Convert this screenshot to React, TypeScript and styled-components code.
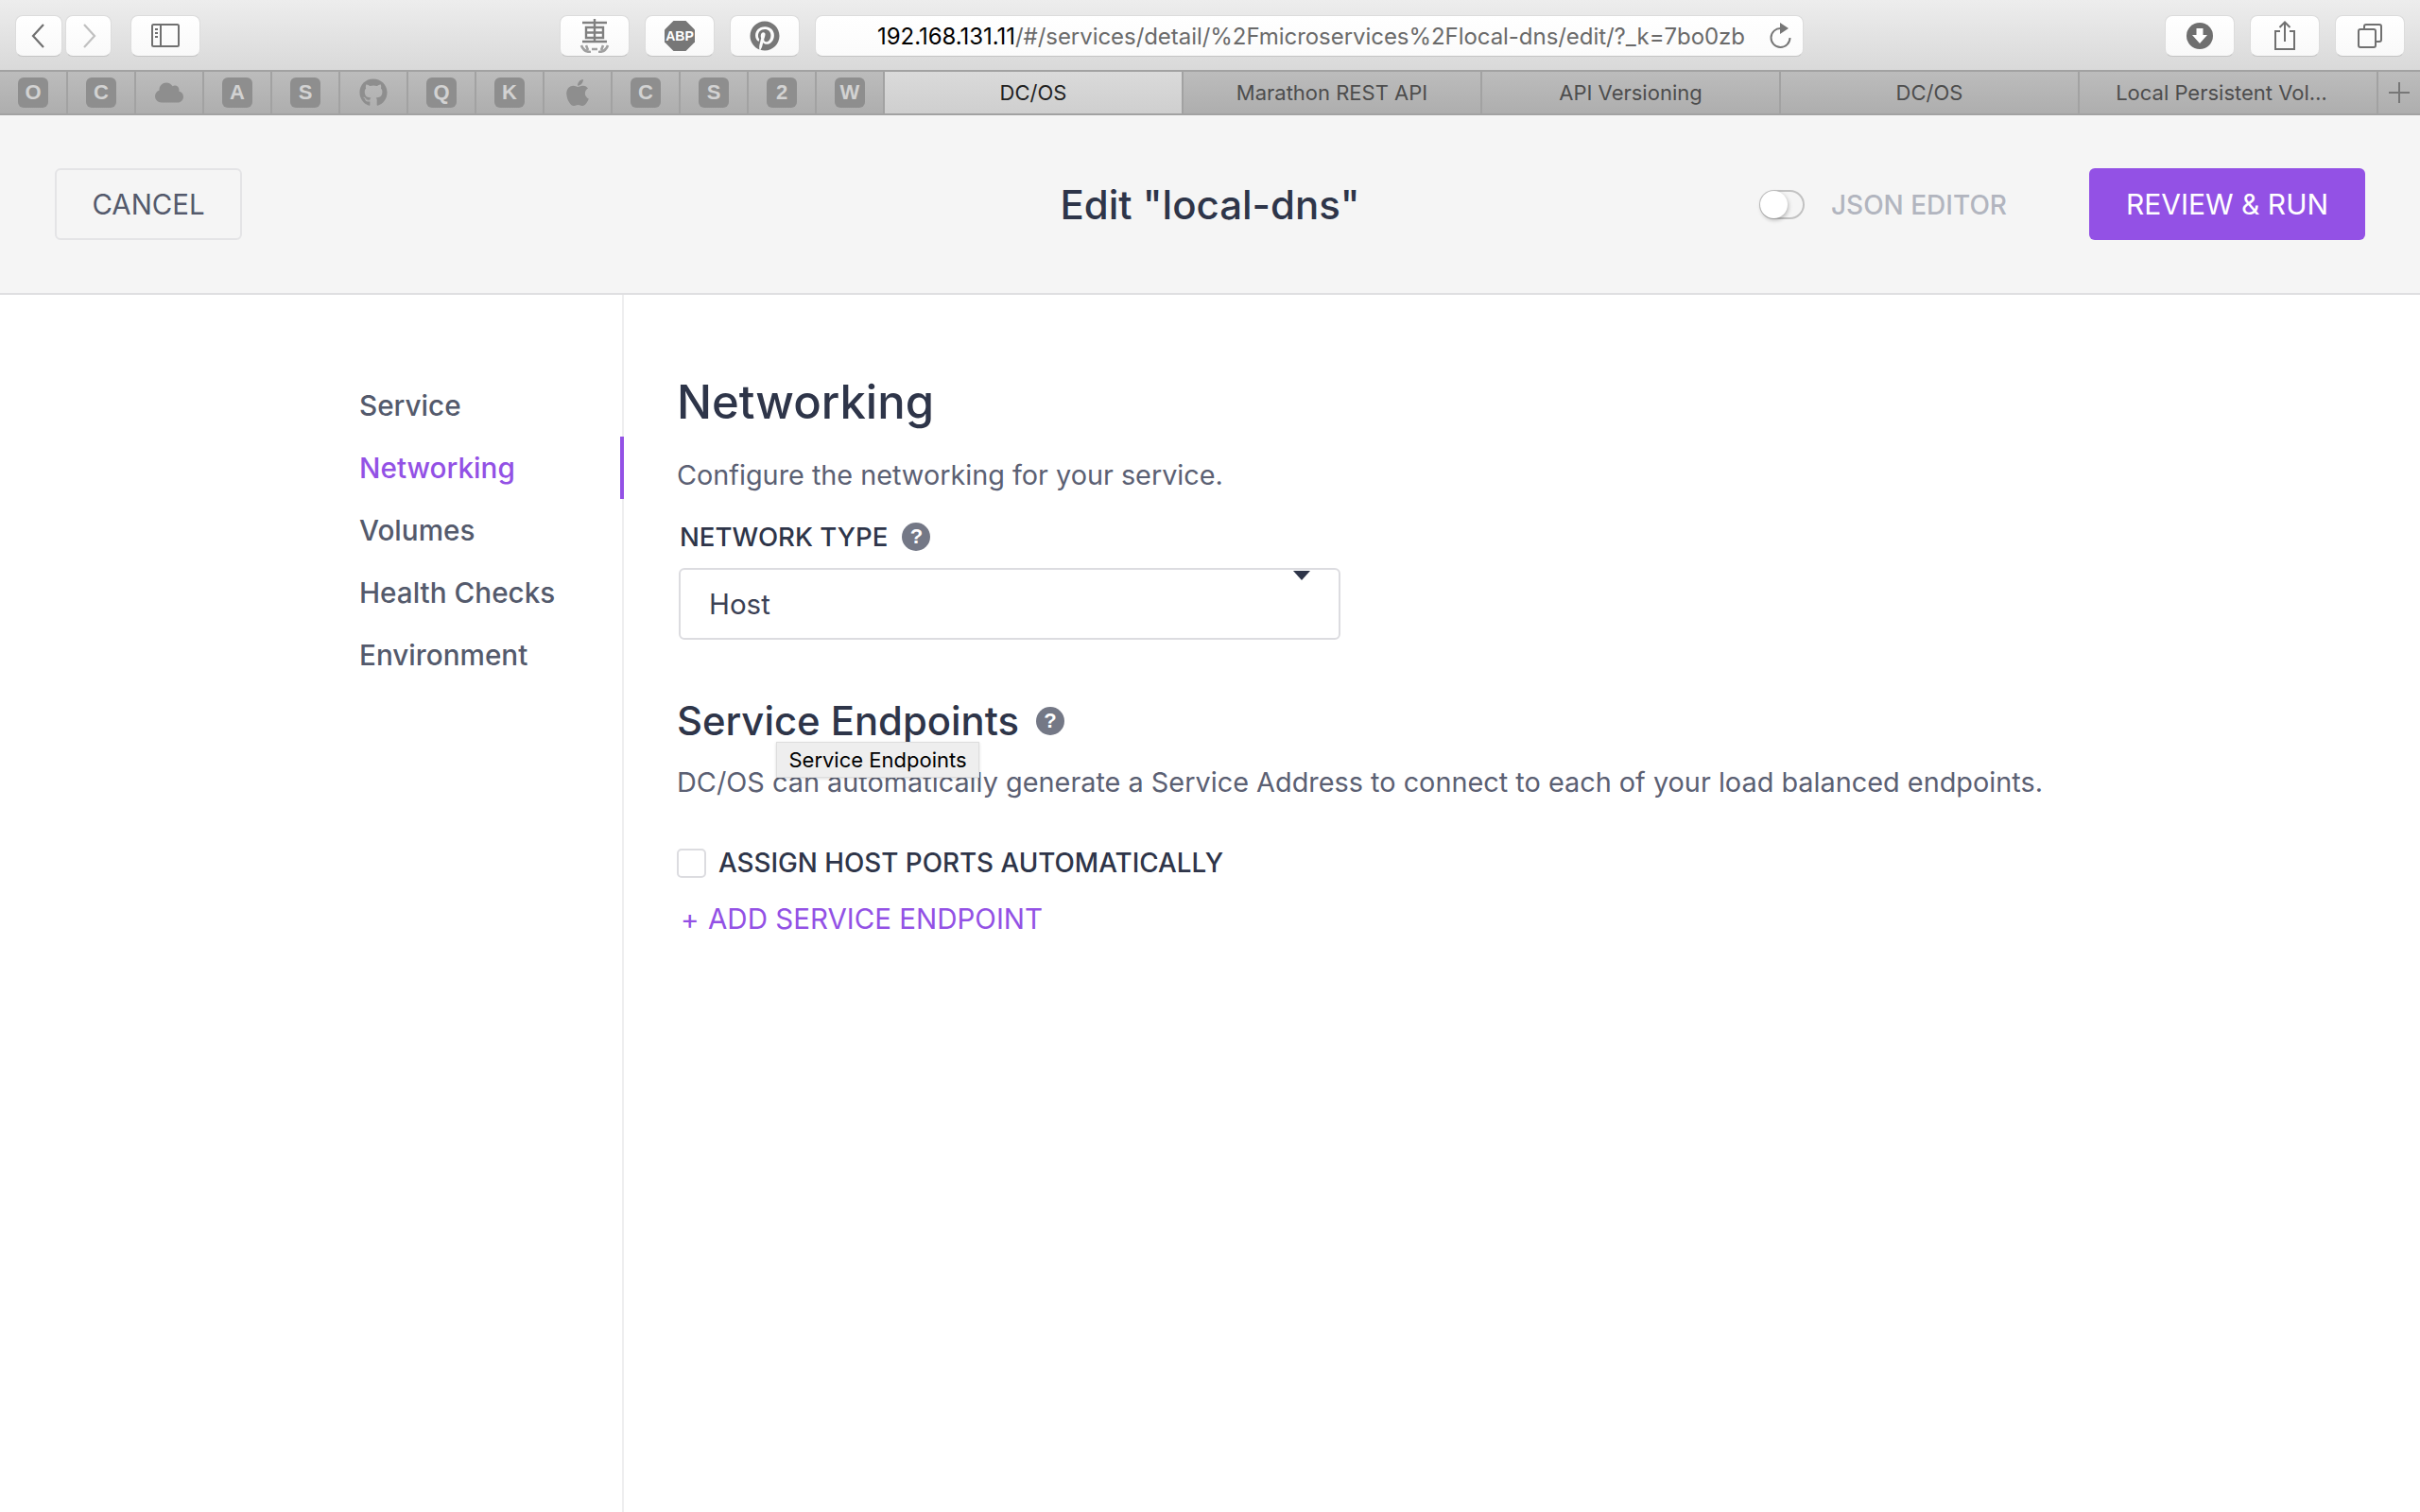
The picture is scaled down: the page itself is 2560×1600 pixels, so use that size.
import React from "react";
import styled, { createGlobalStyle } from "styled-components";
import { FaApple, FaCloud, FaGithub, FaPinterest } from "react-icons/fa";

const GlobalStyle = createGlobalStyle`
  html, body {
    margin: 0;
    padding: 0;
    background: #fff;
    font-family: Inter, "Liberation Sans", sans-serif;
  }
  * {
    box-sizing: border-box;
  }
`;

const favicons = ["O", "C", "cloud", "A", "S", "github", "Q", "K", "apple", "C", "S", "2", "W"];
const tabs = ["DC/OS", "Marathon REST API", "API Versioning", "DC/OS", "Local Persistent Vol…"];
const steps = ["Service", "Networking", "Volumes", "Health Checks", "Environment"];

const HelpIcon = ({ size }: { size: number }) => (
  <HelpCircle $size={size}>?</HelpCircle>
);

const Favicon = ({ name }: { name: string }) => {
  if (name === "cloud") return <FaviconGlyph><FaCloud size={30} /></FaviconGlyph>;
  if (name === "github") return <FaviconGlyph><FaGithub size={30} /></FaviconGlyph>;
  if (name === "apple") return <FaviconGlyph><FaApple size={32} /></FaviconGlyph>;
  return <FaviconBox>{name}</FaviconBox>;
};

export default function App() {
  return (
    <Page>
      <GlobalStyle />
      <Toolbar>
        <NavGroup>
          <NavButton $width={50}>
            <svg width="16" height="28" viewBox="0 0 16 28">
              <path d="M13 2 L2 14 L13 26" fill="none" stroke="#707070" strokeWidth="2.2" />
            </svg>
          </NavButton>
          <NavButton $width={49}>
            <svg width="16" height="28" viewBox="0 0 16 28">
              <path d="M3 2 L14 14 L3 26" fill="none" stroke="#c0c0c0" strokeWidth="2.2" />
            </svg>
          </NavButton>
          <SidebarButton $width={74}>
            <svg width="30" height="26" viewBox="0 0 30 26">
              <rect x="1" y="1" width="28" height="23" rx="1.5" fill="none" stroke="#707070" strokeWidth="2" />
              <path d="M10 1 V24" stroke="#707070" strokeWidth="2" />
              <path d="M4 6 H7 M4 10 H7 M4 14 H7" stroke="#707070" strokeWidth="2" />
            </svg>
          </SidebarButton>
        </NavGroup>
        <ExtensionGroup>
          <NavButton $width={74}>
            <svg width="34" height="36" viewBox="0 0 34 36">
              <path d="M4 4 H30 M17 0 V25 M8 9 H26 V20 H8 Z M8 14.5 H26 M4 24 H30" fill="none" stroke="#808080" strokeWidth="2.4" />
              <path d="M3 28 C5 34 9 35 13 35 M31 28 C29 34 25 35 21 35 M8 28 L10 33 M26 28 L24 33 M14 32 H20" fill="none" stroke="#a0a0a0" strokeWidth="2.6" />
            </svg>
          </NavButton>
          <NavButton $width={74}>
            <svg width="32" height="32" viewBox="0 0 32 32">
              <path d="M9.5 0 H22.5 L32 9.5 V22.5 L22.5 32 H9.5 L0 22.5 V9.5 Z" fill="#777" />
              <text x="16" y="21" textAnchor="middle" fontFamily="Liberation Sans" fontWeight="700" fontSize="14" fill="#fff">ABP</text>
            </svg>
          </NavButton>
          <NavButton $width={74}>
            <FaPinterest size={32} color="#777" />
          </NavButton>
        </ExtensionGroup>
        <UrlBar>
          <UrlText>
            <UrlHost>192.168.131.11</UrlHost>/#/services/detail/%2Fmicroservices%2Flocal-dns/edit/?_k=7bo0zb
          </UrlText>
          <svg width="26" height="28" viewBox="0 0 26 28">
            <path d="M22.5 16 A10 10 0 1 1 13 6" fill="none" stroke="#777" strokeWidth="2" />
            <path d="M12 0 L21 6 L12 12 Z" fill="#777" />
          </svg>
        </UrlBar>
        <ActionGroup>
          <NavButton $width={74}>
            <svg width="28" height="28" viewBox="0 0 28 28">
              <circle cx="14" cy="14" r="14" fill="#6f6f6f" />
              <path d="M10.5 6 H17.5 V13 H22 L14 22 L6 13 H10.5 Z" fill="#fff" />
            </svg>
          </NavButton>
          <NavButton $width={74}>
            <svg width="24" height="32" viewBox="0 0 24 32">
              <path d="M7 11 H2 V30 H22 V11 H17" fill="none" stroke="#707070" strokeWidth="2" />
              <path d="M12 22 V2 M6.5 7 L12 1.5 L17.5 7" fill="none" stroke="#707070" strokeWidth="2" />
            </svg>
          </NavButton>
          <NavButton $width={74}>
            <svg width="26" height="26" viewBox="0 0 26 26">
              <rect x="1" y="6" width="18" height="19" rx="2" fill="none" stroke="#707070" strokeWidth="2" />
              <path d="M7 6 V3 Q7 1 9 1 H23 Q25 1 25 3 V17 Q25 19 23 19 H19" fill="none" stroke="#707070" strokeWidth="2" />
            </svg>
          </NavButton>
        </ActionGroup>
      </Toolbar>
      <TabBar>
        {favicons.map((name, i) => (
          <FaviconCell key={i}>
            <Favicon name={name} />
          </FaviconCell>
        ))}
        {tabs.map((title, i) => (
          <Tab key={i} $active={i === 0} $clipped={title.endsWith("…")}>
            {title}
          </Tab>
        ))}
        <NewTab>
          <svg width="22" height="22" viewBox="0 0 22 22">
            <path d="M11 0 V22 M0 11 H22" stroke="#777" strokeWidth="2" />
          </svg>
        </NewTab>
      </TabBar>
      <Header>
        <CancelButton>CANCEL</CancelButton>
        <ModalTitle>Edit "local-dns"</ModalTitle>
        <HeaderActions>
          <ToggleTrack>
            <ToggleKnob />
          </ToggleTrack>
          <ToggleLabel>JSON EDITOR</ToggleLabel>
          <RunButton>REVIEW &amp; RUN</RunButton>
        </HeaderActions>
      </Header>
      <Body>
        <Sidebar>
          {steps.map((step) => (
            <Step key={step} $active={step === "Networking"}>
              {step}
            </Step>
          ))}
        </Sidebar>
        <Content>
          <Heading>Networking</Heading>
          <Description>Configure the networking for your service.</Description>
          <FieldLabel>
            NETWORK TYPE <HelpIcon size={30} />
          </FieldLabel>
          <SelectBox>
            Host
            <SelectCaret />
          </SelectBox>
          <EndpointSection>
            <SubHeading>
              Service Endpoints <HelpIcon size={30} />
            </SubHeading>
            <Tooltip>Service Endpoints</Tooltip>
            <EndpointText>
              DC/OS can automatically generate a Service Address to connect to each of your load balanced endpoints.
            </EndpointText>
          </EndpointSection>
          <CheckRow>
            <CheckBox />
            ASSIGN HOST PORTS AUTOMATICALLY
          </CheckRow>
          <AddLink>
            <AddPlus>+</AddPlus>
            ADD SERVICE ENDPOINT
          </AddLink>
        </Content>
      </Body>
    </Page>
  );
}

const Page = styled.div`
  display: flex;
  flex-direction: column;
  width: 100%;
  height: 100vh;
  overflow: hidden;
`;

const Toolbar = styled.div`
  display: flex;
  align-items: center;
  height: 74px;
  padding: 2px 16px 0;
  background: linear-gradient(#ededed, #d9d9d9);
`;

const NavGroup = styled.div`
  display: flex;
  gap: 3px;
  width: 576px;
`;

const NavButton = styled.div<{ $width: number }>`
  display: flex;
  align-items: center;
  justify-content: center;
  width: ${(props) => props.$width}px;
  height: 44px;
  background: linear-gradient(#fff, #f9f9f9);
  border: 1px solid #dcdcdc;
  border-bottom-color: #c4c4c4;
  border-radius: 8px;
`;

const SidebarButton = styled(NavButton)`
  margin-left: 17px;
`;

const ExtensionGroup = styled.div`
  display: flex;
  gap: 16px;
`;

const UrlBar = styled.div`
  display: flex;
  align-items: center;
  justify-content: space-between;
  width: 1046px;
  height: 44px;
  margin-left: 16px;
  padding: 0 10px 0 65px;
  background: linear-gradient(#fff, #fbfbfb);
  border: 1px solid #dcdcdc;
  border-bottom-color: #c4c4c4;
  border-radius: 8px;
`;

const UrlText = styled.div`
  font-size: 24px;
  letter-spacing: -0.05px;
  color: #6a6a6a;
  white-space: nowrap;
`;

const UrlHost = styled.span`
  color: #000;
`;

const ActionGroup = styled.div`
  display: flex;
  gap: 16px;
  margin-left: auto;
`;

const TabBar = styled.div`
  display: flex;
  height: 48px;
  background: linear-gradient(#bcbcbc, #aeaeae);
  border-top: 2px solid #a2a2a2;
  border-bottom: 2px solid #a2a2a2;
`;

const FaviconCell = styled.div`
  display: flex;
  align-items: center;
  justify-content: center;
  width: 72px;
  border-right: 2px solid #a2a2a2;
`;

const FaviconBox = styled.div`
  display: flex;
  align-items: center;
  justify-content: center;
  width: 32px;
  height: 32px;
  background: #8e8e8e;
  border-radius: 6px;
  font-family: "Liberation Sans", sans-serif;
  font-size: 22px;
  font-weight: 700;
  color: #d2d2d2;
`;

const FaviconGlyph = styled.div`
  display: flex;
  color: #8e8e8e;
`;

const Tab = styled.div<{ $active?: boolean; $clipped?: boolean }>`
  display: flex;
  align-items: center;
  justify-content: center;
  width: 316px;
  padding-right: ${(props) => (props.$clipped ? "14px" : "0")};
  border-right: 2px solid #a2a2a2;
  background: ${(props) => (props.$active ? "linear-gradient(#dadada, #cfcfcf)" : "transparent")};
  font-size: 22px;
  color: ${(props) => (props.$active ? "#222" : "#4d4d4d")};
`;

const NewTab = styled.div`
  display: flex;
  flex: 1;
  align-items: center;
  justify-content: center;
`;

const Header = styled.div`
  display: grid;
  grid-template-columns: 1fr auto 1fr;
  align-items: center;
  height: 190px;
  padding: 0 58px;
  background: #f5f5f5;
  border-bottom: 2px solid #dfdfe1;
`;

const CancelButton = styled.div`
  display: flex;
  align-items: center;
  justify-content: center;
  width: 198px;
  height: 76px;
  border: 2px solid #e4e4e6;
  border-radius: 6px;
  font-size: 29.4px;
  color: #545a6c;
`;

const ModalTitle = styled.div`
  margin-top: 1px;
  font-size: 42px;
  font-weight: 500;
  color: #2e3549;
`;

const HeaderActions = styled.div`
  display: flex;
  align-items: center;
  justify-content: flex-end;
`;

const ToggleTrack = styled.div`
  position: relative;
  width: 48px;
  height: 31px;
  border: 2px solid #c2c2c2;
  border-radius: 16px;
`;

const ToggleKnob = styled.div`
  position: absolute;
  top: -1px;
  left: -1px;
  width: 29px;
  height: 29px;
  background: #fff;
  border-radius: 50%;
  box-shadow: 1px 2px 4px rgba(0, 0, 0, 0.25);
`;

const ToggleLabel = styled.div`
  margin: 1px 0 0 28px;
  font-size: 28px;
  font-weight: 500;
  color: #b2b5bf;
`;

const RunButton = styled.div`
  display: flex;
  align-items: center;
  justify-content: center;
  width: 292px;
  height: 76px;
  margin-left: 87px;
  background: #9351e5;
  border-radius: 6px;
  font-size: 30px;
  color: #fff;
`;

const Body = styled.div`
  display: flex;
  flex: 1;
`;

const Sidebar = styled.div`
  width: 660px;
  padding: 84px 0 0 380px;
  border-right: 2px solid #eeeeef;
`;

const Step = styled.div<{ $active?: boolean }>`
  display: flex;
  align-items: center;
  height: 66px;
  margin-right: -2px;
  border-right: 4px solid ${(props) => (props.$active ? "#9351e5" : "transparent")};
  font-size: 29.7px;
  font-weight: 500;
  color: ${(props) => (props.$active ? "#9351e5" : "#545a6c")};
`;

const Content = styled.div`
  flex: 1;
  padding: 0 0 0 56px;
`;

const Heading = styled.div`
  margin-top: 84px;
  font-size: 49px;
  line-height: 60px;
  font-weight: 500;
  color: #2e3549;
`;

const Description = styled.div`
  margin-top: 27px;
  font-size: 28.8px;
  line-height: 40px;
  color: #5b6073;
`;

const FieldLabel = styled.div`
  display: flex;
  align-items: center;
  gap: 15px;
  margin: 30px 0 0 3px;
  height: 30px;
  font-size: 27.6px;
  font-weight: 500;
  color: #2e3549;
`;

const HelpCircle = styled.span<{ $size: number }>`
  display: inline-flex;
  align-items: center;
  justify-content: center;
  width: ${(props) => props.$size}px;
  height: ${(props) => props.$size}px;
  background: #747886;
  border-radius: 50%;
  font-family: "Liberation Sans", sans-serif;
  font-size: 22px;
  font-weight: 700;
  color: #fff;
`;

const SelectBox = styled.div`
  position: relative;
  display: flex;
  align-items: center;
  width: 700px;
  height: 76px;
  margin: 18px 0 0 2px;
  padding-left: 30px;
  border: 2px solid #dcdce0;
  border-radius: 6px;
  font-size: 29.5px;
  color: #3b4155;
`;

const SelectCaret = styled.div`
  position: absolute;
  top: 1px;
  right: 30px;
  border-left: 9px solid transparent;
  border-right: 9px solid transparent;
  border-top: 10px solid #2e3549;
`;

const EndpointSection = styled.div`
  position: relative;
  margin-top: 58px;
`;

const SubHeading = styled.div`
  display: flex;
  align-items: center;
  gap: 18px;
  font-size: 41.8px;
  line-height: 56px;
  font-weight: 500;
  color: #2e3549;
`;

const Tooltip = styled.div`
  position: absolute;
  top: 50px;
  left: 105px;
  display: flex;
  align-items: center;
  justify-content: center;
  width: 215px;
  height: 38px;
  background: #eeeeee;
  border: 1px solid #dddddd;
  box-shadow: 0 1px 3px rgba(0, 0, 0, 0.15);
  font-size: 22px;
  color: #000;
`;

const EndpointText = styled.div`
  margin-top: 17px;
  font-size: 28.85px;
  line-height: 40px;
  color: #5b6073;
`;

const CheckRow = styled.div`
  display: flex;
  align-items: center;
  gap: 13px;
  margin-top: 48px;
  font-size: 27.8px;
  font-weight: 500;
  color: #2e3549;
`;

const CheckBox = styled.div`
  width: 31px;
  height: 31px;
  background: #fff;
  border: 2px solid #dcdce0;
  border-radius: 5px;
`;

const AddLink = styled.div`
  display: flex;
  align-items: center;
  margin: 24px 0 0 4px;
  font-size: 29.5px;
  color: #9351e5;
`;

const AddPlus = styled.span`
  width: 29px;
`;
